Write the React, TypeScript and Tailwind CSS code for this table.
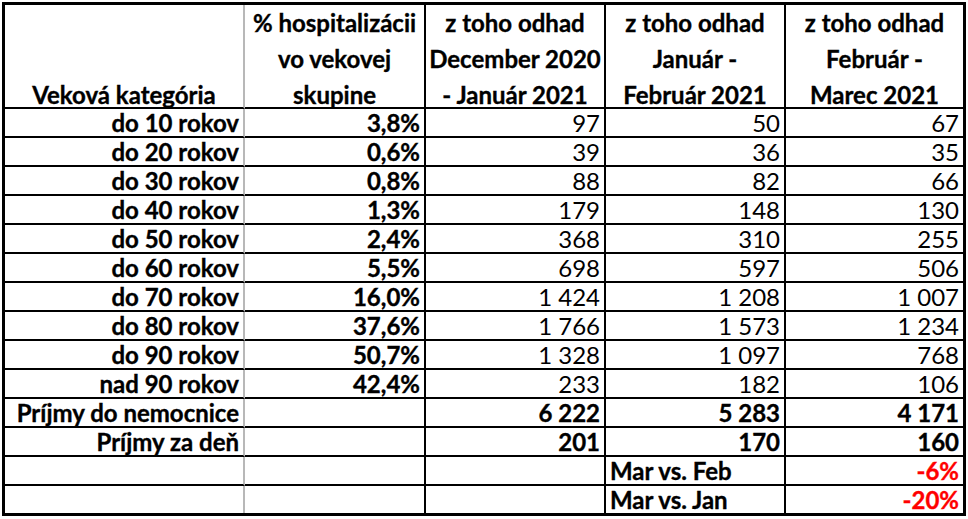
import React from 'react';

type Row = {
  label: string;
  pct?: string;
  values: string[];
  bold?: boolean;
};

const rows: Row[] = [
  { label: "do 10 rokov", pct: "3,8%", values: ["97", "50", "67"] },
  { label: "do 20 rokov", pct: "0,6%", values: ["39", "36", "35"] },
  { label: "do 30 rokov", pct: "0,8%", values: ["88", "82", "66"] },
  { label: "do 40 rokov", pct: "1,3%", values: ["179", "148", "130"] },
  { label: "do 50 rokov", pct: "2,4%", values: ["368", "310", "255"] },
  { label: "do 60 rokov", pct: "5,5%", values: ["698", "597", "506"] },
  { label: "do 70 rokov", pct: "16,0%", values: ["1 424", "1 208", "1 007"] },
  { label: "do 80 rokov", pct: "37,6%", values: ["1 766", "1 573", "1 234"] },
  { label: "do 90 rokov", pct: "50,7%", values: ["1 328", "1 097", "768"] },
  { label: "nad 90 rokov", pct: "42,4%", values: ["233", "182", "106"] },
  { label: "Príjmy do nemocnice", values: ["6 222", "5 283", "4 171"], bold: true },
  { label: "Príjmy za deň", values: ["201", "170", "160"], bold: true },
];

const compare = [
  { label: "Mar vs. Feb", value: "-6%" },
  { label: "Mar vs. Jan", value: "-20%" },
];

const headers = [
  ["z toho odhad", "December 2020", "- Január 2021"],
  ["z toho odhad", "Január -", "Február 2021"],
  ["z toho odhad", "Február -", "Marec 2021"],
];

// bold text in the sheet is heavier than Lato Bold, thicken it a touch
const heavy = "font-bold [-webkit-text-stroke:0.35px_currentColor]";
const cell = "h-[29px] border-b-2 border-black flex items-center px-[4px] leading-none";
const head = "h-[104px] border-b-2 border-black flex flex-col items-center justify-start leading-[36px]";

const App: React.FC = () => {
  return (
    <div className="w-[968px] h-[519px] bg-white overflow-hidden pt-[2px] pl-[2px] font-['Lato','Liberation_Sans',sans-serif] text-[24px] text-black">
      <div className="w-[964px] border-[3px] border-black grid grid-cols-[240px_181px_180px_180px_177px]">
        {/* header */}
        <div className={`${head} ${heavy} border-r-2 border-r-[#b8b8b8] pt-[72px]`}>
          <span className="whitespace-nowrap">Veková kategória</span>
        </div>
        <div className={`${head} ${heavy} border-r-2`}>
          <span>% hospitalizácii</span>
          <span>vo vekovej</span>
          <span>skupine</span>
        </div>
        {headers.map((h, i) => (
          <div key={i} className={`${head} ${heavy} ${i < 2 ? 'border-r-2' : ''}`}>
            {h.map((line) => (
              <span key={line} className="whitespace-nowrap">{line}</span>
            ))}
          </div>
        ))}

        {/* data rows */}
        {rows.map((r) => (
          <React.Fragment key={r.label}>
            <div className={`${cell} ${heavy} justify-end border-r-2 border-r-[#b8b8b8] whitespace-nowrap`}>{r.label}</div>
            <div className={`${cell} ${heavy} justify-end border-r-2`}>{r.pct ?? ''}</div>
            {r.values.map((v, i) => (
              <div key={i} className={`${cell} justify-end ${r.bold ? heavy : ''} ${i < 2 ? 'border-r-2' : ''}`}>
                {v}
              </div>
            ))}
          </React.Fragment>
        ))}

        {compare.map((c, idx) => {
          const last = idx === compare.length - 1;
          const c2 = last ? "h-[27px] flex items-center px-[4px] leading-none" : cell;
          return (
            <React.Fragment key={c.label}>
              <div className={`${c2} border-r-2 border-r-[#b8b8b8]`}></div>
              <div className={`${c2} border-r-2 border-r-black`}></div>
              <div className={`${c2} border-r-2 border-r-black`}></div>
              <div className={`${c2} ${heavy} border-r-2 border-r-black`}>{c.label}</div>
              <div className={`${c2} ${heavy} justify-end text-[#ff0000]`}>{c.value}</div>
            </React.Fragment>
          );
        })}
      </div>
    </div>
  );
};

export default App;
